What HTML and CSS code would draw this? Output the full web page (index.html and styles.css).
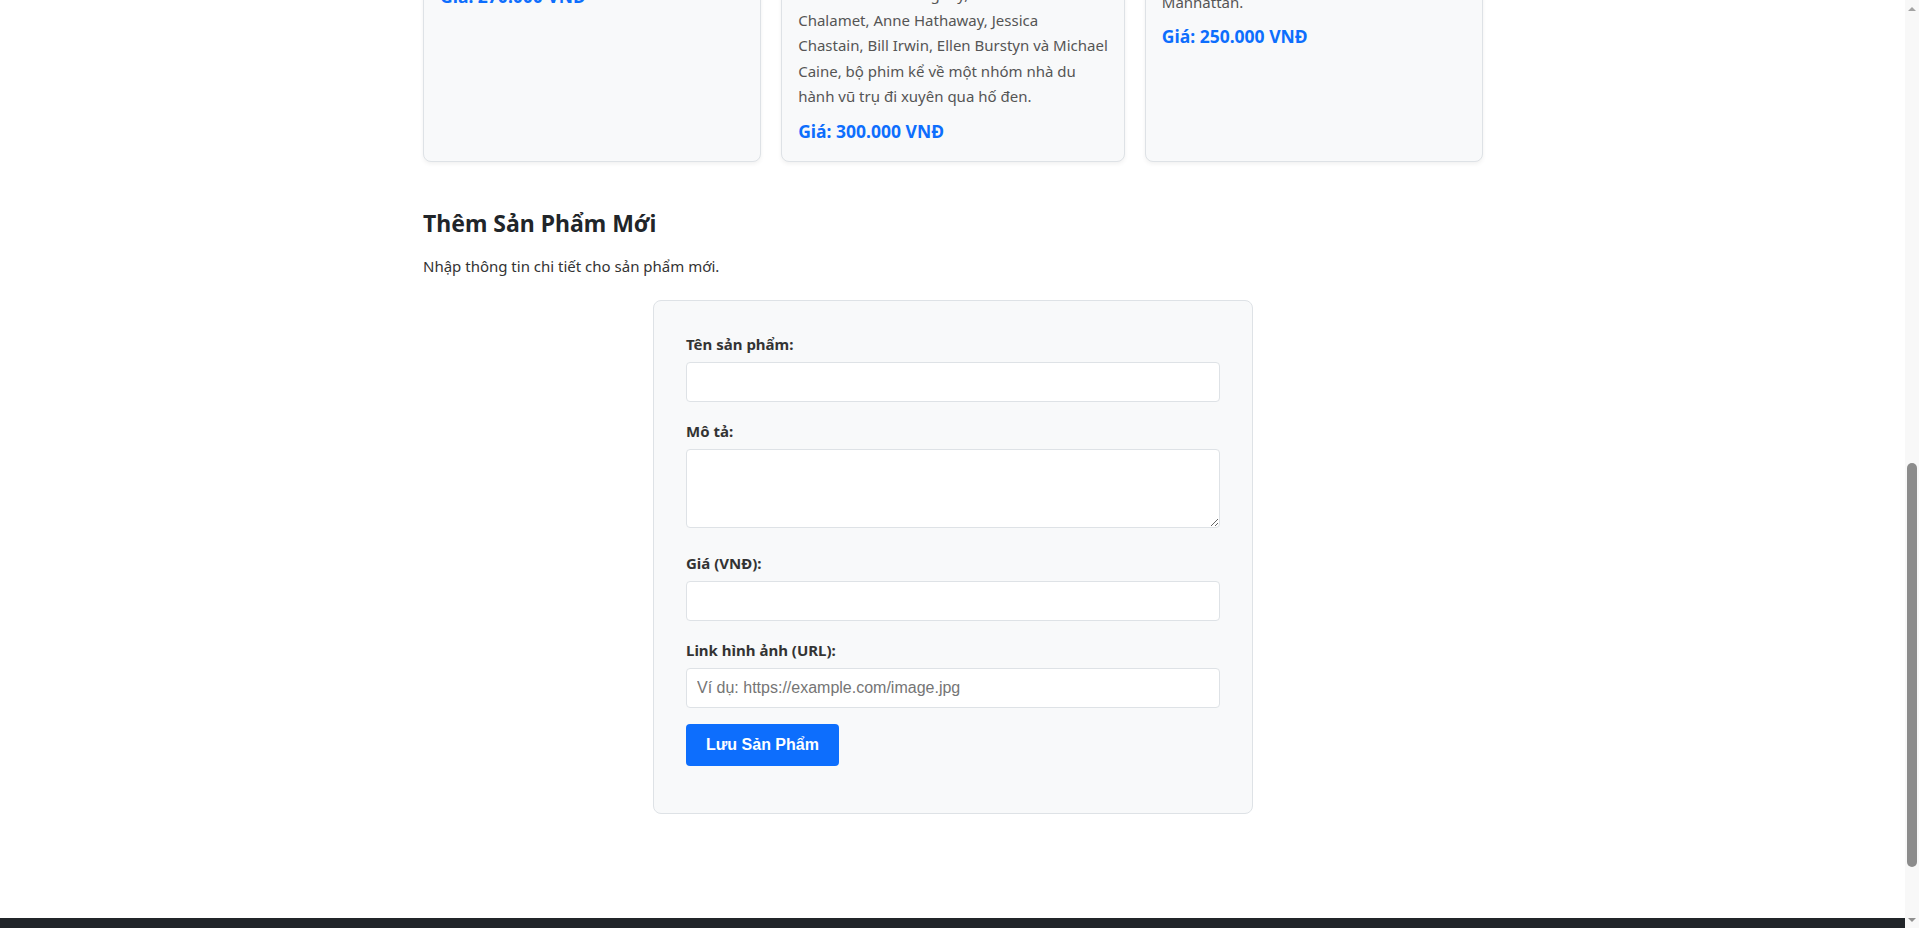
FILE: index.html
```html
<!DOCTYPE html>
<html lang="vi">
<head>
<meta charset="utf-8">
<title>Cửa Hàng Phim</title>
<link rel="stylesheet" href="styles.css">
</head>
<body>
<header class="navbar">
  <div class="container navbar-inner">
    <span class="brand">Cửa Hàng Phim</span>
    <nav class="nav-links">
      <a href="#products">Sản phẩm</a>
      <a href="#add-product">Thêm sản phẩm</a>
    </nav>
  </div>
</header>

<section class="hero">
  <div class="container">
    <h1 class="hero-title">Chào mừng đến với Cửa Hàng Phim</h1>
    <p class="hero-text">Khám phá những bộ phim kinh điển với giá tốt nhất.</p>
  </div>
</section>

<main class="container main">
  <section class="products" id="products">
    <h2 class="section-title">Danh Sách Sản Phẩm</h2>
    <p class="section-text">Những bộ phim đang được bán tại cửa hàng.</p>
    <div class="product-grid">
      <article class="product-card">
        <svg class="poster" width="100%" height="413" aria-hidden="true">
          <rect width="100%" height="100%" rx="6" fill="#1c2b3a"/>
          <circle cx="50%" cy="45%" r="48" fill="none" stroke="#4d6a88" stroke-width="6"/>
          <circle cx="50%" cy="45%" r="10" fill="#4d6a88"/>
        </svg>
        <h3 class="product-title">Inception (2010)</h3>
        <p class="product-desc">Dom Cobb đánh cắp bí mật từ tiềm thức<br>của con người thông qua giấc mơ.</p>
        <p class="price">Giá: 270.000 VNĐ</p>
      </article>
      <article class="product-card">
        <svg class="poster" width="100%" height="420" aria-hidden="true">
          <rect width="100%" height="100%" rx="6" fill="#14161f"/>
          <circle cx="50%" cy="45%" r="60" fill="none" stroke="#c48a3a" stroke-width="8"/>
          <circle cx="50%" cy="45%" r="40" fill="#000"/>
        </svg>
        <h3 class="product-title">Interstellar (2014)</h3>
        <p class="product-desc">Interstellar (2014) của đạo diễn<br>Christopher Nolan, với sự tham gia của<br>Matthew McConaughey, Timothée<br>Chalamet, Anne Hathaway, Jessica<br>Chastain, Bill Irwin, Ellen Burstyn và Michael<br>Caine, bộ phim kể về một nhóm nhà du<br>hành vũ trụ đi xuyên qua hố đen.</p>
        <p class="price">Giá: 300.000 VNĐ</p>
      </article>
      <article class="product-card">
        <svg class="poster" width="100%" height="402" aria-hidden="true">
          <rect width="100%" height="100%" rx="6" fill="#2a1a1c"/>
          <polygon points="153,120 190,200 120,200" fill="#b33a3a"/>
        </svg>
        <h3 class="product-title">The Avengers (2012)</h3>
        <p class="product-desc">Biệt đội siêu anh hùng hợp sức chống<br>lại Loki và đội quân Chitauri trong trận<br>chiến lịch sử tại thành phố New York,<br>Manhattan.</p>
        <p class="price">Giá: 250.000 VNĐ</p>
      </article>
    </div>
  </section>

  <section class="add-section" id="add-product">
    <h2 class="add-title">Thêm Sản Phẩm Mới</h2>
    <p class="add-text">Nhập thông tin chi tiết cho sản phẩm mới.</p>
    <form class="product-form">
      <div class="form-group">
        <label class="form-label" for="name">Tên sản phẩm:</label>
        <input class="form-input" type="text" id="name">
      </div>
      <div class="form-group">
        <label class="form-label" for="desc">Mô tả:</label>
        <textarea class="form-input form-textarea" id="desc"></textarea>
      </div>
      <div class="form-group">
        <label class="form-label" for="price">Giá (VNĐ):</label>
        <input class="form-input" type="text" id="price">
      </div>
      <div class="form-group">
        <label class="form-label" for="image">Link hình ảnh (URL):</label>
        <input class="form-input" type="text" id="image" placeholder="Ví dụ: https://example.com/image.jpg">
      </div>
      <button class="btn-save" type="button">Lưu Sản Phẩm</button>
    </form>
  </section>
</main>

<footer class="footer">
  <div class="container">
    <p class="footer-text">© 2024 Cửa Hàng Phim. Bảo lưu mọi quyền.</p>
  </div>
</footer>

<div class="scrollbar" aria-hidden="true">
  <span class="scroll-arrow scroll-arrow-up"></span>
  <div class="scroll-track">
    <span class="scroll-thumb"></span>
  </div>
  <span class="scroll-arrow scroll-arrow-down"></span>
</div>
<script src="script.js"></script>
</body>
</html>
```
FILE: styles.css
```css
* {
  box-sizing: border-box;
}

html {
  scroll-behavior: auto;
}

body {
  margin: 0 13px 0 0;
  font-family: "Noto Sans", "Open Sans", sans-serif;
  font-size: 15px;
  line-height: 1.5;
  color: #333;
  background: #fff;
}

.container {
  max-width: 1060px;
  margin: 0 auto;
}

/* navbar */
.navbar {
  background: #212529;
  color: #fff;
}

.navbar-inner {
  display: flex;
  align-items: center;
  justify-content: space-between;
  height: 56px;
}

.brand {
  font-size: 19px;
  font-weight: 700;
}

.nav-links {
  display: flex;
  gap: 20px;
}

.nav-links a {
  color: #dee2e6;
  text-decoration: none;
}

/* hero */
.hero {
  background: #e9ecef;
  padding: 60px 0;
}

.hero-title {
  margin: 0 0 12px;
  font-size: 34px;
  line-height: 1.2;
  color: #212529;
}

.hero-text {
  margin: 0;
  font-size: 17px;
  color: #555;
}

.main {
  padding-top: 40px;
  padding-bottom: 104px;
}

/* products */
.products {
  margin-bottom: 48px;
}

.section-title {
  margin: 0 0 8px;
  font-size: 23px;
  line-height: 1.2;
  color: #212529;
}

.section-text {
  margin: 0 0 24px;
}

.product-grid {
  display: grid;
  grid-template-columns: repeat(3, 1fr);
  gap: 20px;
}

.product-card {
  background: #f8f9fa;
  border: 1px solid #dee2e6;
  border-radius: 8px;
  padding: 16px;
  box-shadow: 0 2px 4px rgba(0, 0, 0, 0.06);
}

.poster {
  display: block;
  margin-bottom: 12px;
}

.product-title {
  margin: 0 0 8px;
  font-size: 19px;
  line-height: 26px;
  color: #212529;
}

.product-desc {
  margin: 0 0 8px;
  font-size: 15px;
  line-height: 25.5px;
  color: #555;
  white-space: nowrap;
}

.price {
  margin: 0;
  font-size: 17.5px;
  line-height: 27px;
  font-weight: 700;
  color: #0d6efd;
}

/* add product */
.add-title {
  margin: 0 0 18px;
  font-size: 23px;
  line-height: 1.2;
  color: #212529;
}

.add-text {
  margin: 0 0 22px;
}

.product-form {
  max-width: 600px;
  margin: 0 auto;
  background: #f8f9fa;
  border: 1px solid #dee2e6;
  border-radius: 8px;
  padding: 34px 32px 47px;
}

.form-group {
  margin-bottom: 20px;
}

.form-group:last-of-type {
  margin-bottom: 16px;
}

.form-label {
  display: block;
  margin-bottom: 8px;
  font-size: 15px;
  line-height: 19px;
  font-weight: 700;
  color: #333;
}

.form-input {
  display: block;
  width: 100%;
  padding: 10px;
  border: 1px solid #dee2e6;
  border-radius: 4px;
  background: #fff;
  font-family: "Liberation Sans", Arial, sans-serif;
  font-size: 16px;
  line-height: 18px;
  color: #212529;
}

.form-input::placeholder {
  color: #757575;
}

.form-textarea {
  height: 79px;
  margin-bottom: 26px;
  resize: vertical;
}

.btn-save {
  display: inline-block;
  padding: 12px 20px;
  border: none;
  border-radius: 4px;
  background: #0d6efd;
  color: #fff;
  font-family: "Liberation Sans", Arial, sans-serif;
  font-size: 16px;
  line-height: 18px;
  font-weight: 700;
  cursor: pointer;
}

/* footer */
.footer {
  background: #212529;
  color: #adb5bd;
  padding: 45px 0;
}

.footer-text {
  margin: 0;
  text-align: center;
  line-height: 24px;
}

/* window scrollbar (drawn, the page is shown scrolled) */
.scrollbar {
  position: fixed;
  top: 0;
  right: 0;
  bottom: 0;
  width: 14px;
  display: grid;
  grid-template-rows: 17px 1fr 17px;
  background: #f8f8f8;
}

.scroll-arrow {
  display: flex;
  align-items: center;
  justify-content: center;
}

.scroll-arrow::before {
  content: "";
  border-left: 4px solid transparent;
  border-right: 4px solid transparent;
}

.scroll-arrow-up::before {
  border-bottom: 4px solid #a3a3a3;
}

.scroll-arrow-down::before {
  border-top: 4px solid #8f8f8f;
}

.scroll-track {
  padding: 446px 2px 0;
}

.scroll-thumb {
  display: block;
  height: 404px;
  border-radius: 5px;
  background: #8c8c8c;
}
```
FILE: script.js
```js
(function () {
  function alignView() {
    var grid = document.querySelector('.product-grid');
    if (!grid) return;
    var rect = grid.getBoundingClientRect();
    var bottom = rect.bottom + window.pageYOffset;
    window.scrollTo(0, Math.round(bottom - 162));
  }
  alignView();
  window.addEventListener('load', alignView);
})();
```
